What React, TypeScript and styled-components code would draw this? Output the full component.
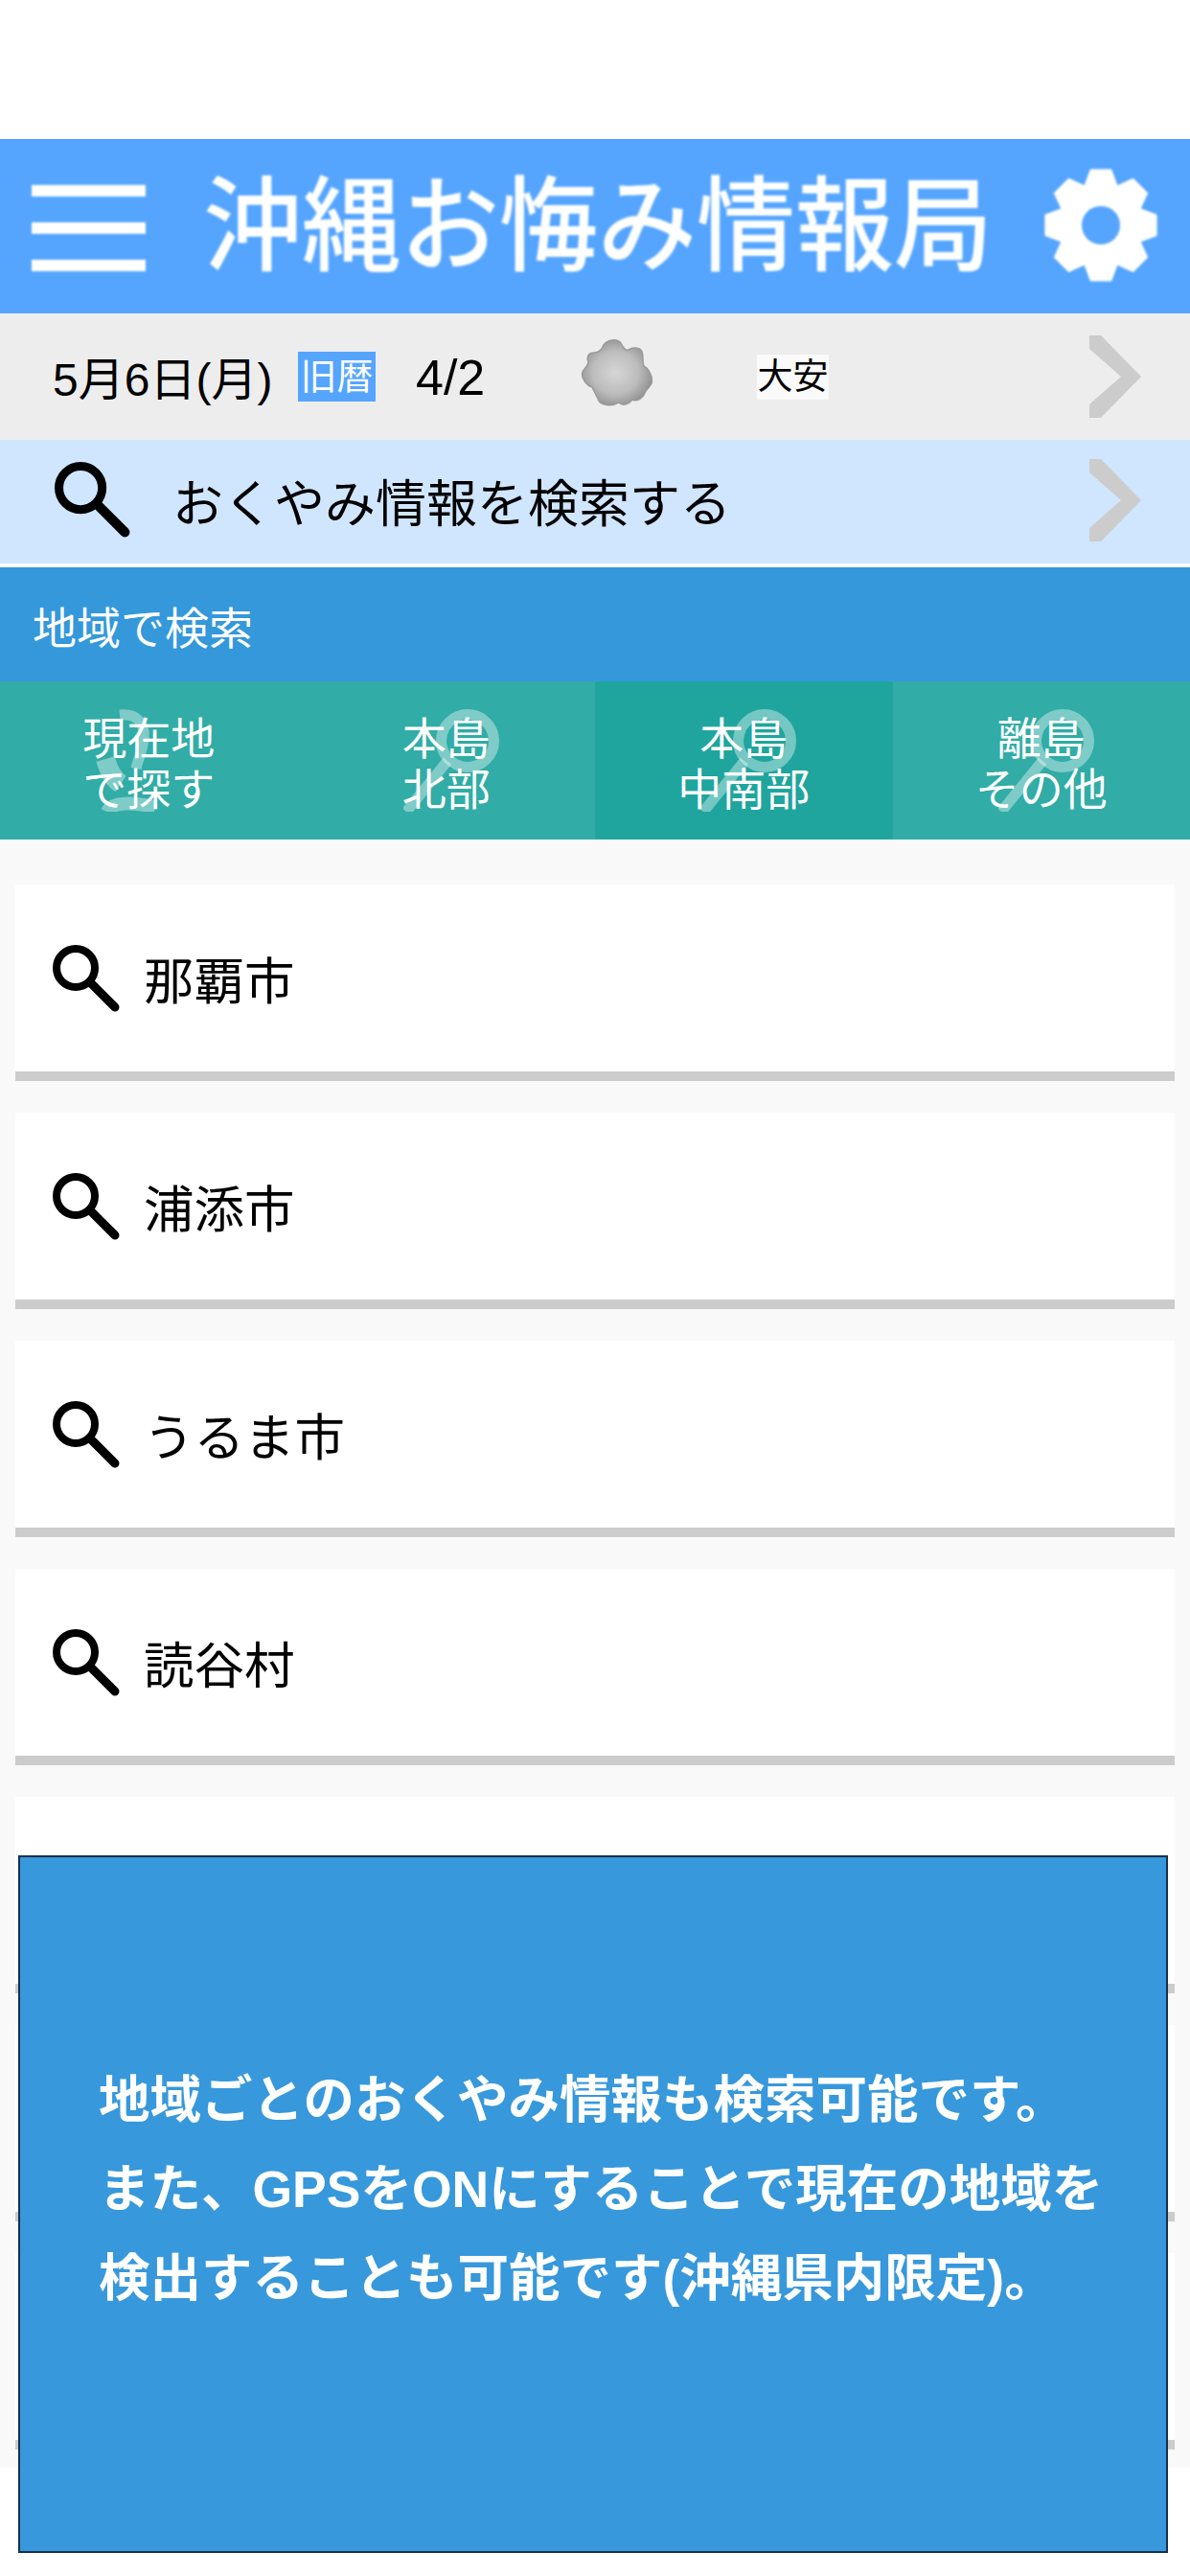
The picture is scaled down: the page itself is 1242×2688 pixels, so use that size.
import React from "react";
import styled, { createGlobalStyle } from "styled-components";

const GlobalStyle = createGlobalStyle`
  html, body {
    margin: 0;
    padding: 0;
    background: #fff;
  }
  body {
    font-family: "Liberation Sans", "Noto Sans CJK JP", sans-serif;
  }
`;

const Page = styled.div`
  position: relative;
  width: 1242px;
  height: 2688px;
  padding-top: 145px;
  box-sizing: border-box;
  overflow: hidden;
  background: #fff;
`;

const Header = styled.header`
  display: flex;
  align-items: center;
  height: 182px;
  padding: 0 32px 0 33px;
  box-sizing: border-box;
  background: #55a5ff;
`;

const MenuButton = styled.div`
  display: flex;
  flex-direction: column;
  gap: 27px;
  width: 119px;
  margin-top: 3px;
  filter: blur(1px);
`;

const MenuBar = styled.span`
  display: block;
  height: 12px;
  background: #fff;
`;

const Title = styled.h1`
  flex: 1;
  margin: 0 0 18px 60px;
  font-family: "Noto Sans CJK JP", sans-serif;
  font-size: 103px;
  font-weight: 500;
  line-height: 1;
  white-space: nowrap;
  color: #fff;
  transform: scaleY(1.05);
  filter: blur(1px);
`;

const GearIcon = styled.svg`
  display: block;
  width: 122px;
  height: 122px;
  margin-top: -2px;
  filter: blur(0.8px);
`;

const DateBar = styled.div`
  display: flex;
  align-items: center;
  height: 132px;
  padding: 0 51px 0 55px;
  box-sizing: border-box;
  background: #ededed;
  color: #000;
`;

const DateText = styled.span`
  width: 256px;
  margin-top: -2px;
  font-size: 48px;
  white-space: nowrap;
`;

const OldCalendar = styled.span`
  width: 81px;
  height: 52px;
  line-height: 52px;
  text-align: center;
  font-size: 38px;
  color: #fff;
  background: #55a5ff;
  white-space: nowrap;
`;

const LunarDate = styled.span`
  width: 172px;
  margin: 1px 0 0 42px;
  font-size: 52px;
`;

const WeatherIcon = styled.svg`
  display: block;
  width: 76px;
  height: 72px;
  margin-top: -6px;
`;

const Rokuyo = styled.span`
  width: 75px;
  height: 47px;
  margin-left: 108px;
  line-height: 47px;
  text-align: center;
  font-size: 37px;
  background: #fafafa;
  white-space: nowrap;
`;

const Chevron = styled.svg`
  display: block;
  width: 54px;
  height: 86px;
  margin-left: auto;
`;

const SearchBar = styled.div`
  display: flex;
  align-items: center;
  height: 133px;
  padding: 0 51px 4px 57px;
  box-sizing: border-box;
  background: #d0e6ff;
  border-bottom: 4px solid #fff;
`;

const SearchText = styled.span`
  margin-left: 44px;
  font-size: 53px;
  color: #000;
  white-space: nowrap;
`;

const SectionTitle = styled.div`
  display: flex;
  align-items: center;
  height: 119px;
  padding-left: 34px;
  box-sizing: border-box;
  font-size: 46px;
  color: #fff;
  background: #3498db;
`;

const Tabs = styled.div`
  display: grid;
  grid-template-columns: repeat(4, 1fr);
  height: 165px;
  background: #31aca6;
`;

const Tab = styled.div<{ $active?: boolean }>`
  position: relative;
  display: flex;
  align-items: center;
  justify-content: center;
  text-align: center;
  font-size: 46px;
  line-height: 53px;
  color: #fff;
  background: ${({ $active }) => ($active ? "#1fa59d" : "transparent")};
  overflow: hidden;
`;

const TabLabel = styled.span`
  position: relative;
  margin-top: 8px;
`;

const TabMark = styled.svg`
  position: absolute;
  top: 29px;
  left: 110px;
  width: 100px;
  height: 107px;
`;

const LocationMark = styled(TabMark)`
  left: 70px;
`;

const CityList = styled.div`
  display: flex;
  flex-direction: column;
  gap: 33px;
  padding: 47px 16px 19px;
  background: #f9f9f9;
`;

const CityCard = styled.div`
  display: flex;
  align-items: center;
  height: 205px;
  padding: 0 0 0 39px;
  box-sizing: border-box;
  background: #fff;
  border-bottom: 10px solid #ccc;
`;

const SearchIcon = styled.svg<{ $size: number; $blur?: boolean }>`
  display: block;
  flex: none;
  width: ${({ $size }) => $size}px;
  height: ${({ $size }) => $size}px;
  filter: ${({ $blur }) => ($blur ? "blur(0.7px)" : "none")};
`;

const CityName = styled.span`
  margin: -2px 0 0 25px;
  font-size: 52.5px;
  color: #000;
  white-space: nowrap;
`;

const Notice = styled.div`
  position: absolute;
  top: 1936px;
  left: 19px;
  display: flex;
  align-items: center;
  width: 1200px;
  height: 728px;
  padding: 0 0 32px 82px;
  box-sizing: border-box;
  border: 2px solid #15304e;
  background: #3798dc;
`;

const NoticeText = styled.p`
  margin: 0;
  font-size: 53.5px;
  font-weight: 700;
  line-height: 93px;
  color: #fff;
  white-space: nowrap;
`;

const gearPath = (() => {
  const points: string[] = [];
  for (let i = 0; i < 8; i++) {
    const base = (i * 45 - 90) * (Math.PI / 180);
    const spread = 10 * (Math.PI / 180);
    const valley = base + 22.5 * (Math.PI / 180);
    [
      [58, base - spread],
      [58, base + spread],
      [43, valley],
    ].forEach(([r, a]) => {
      points.push(`${(61 + r * Math.cos(a)).toFixed(1)} ${(61 + r * Math.sin(a)).toFixed(1)}`);
    });
  }
  return `M${points.join("L")}Z`;
})();

const Magnifier = ({ size, blur }: { size: number; blur?: boolean }) => (
  <SearchIcon $size={size} $blur={blur} viewBox="0 0 70 70" fill="none" stroke="#000">
    <circle cx="24" cy="24" r="20" strokeWidth="8" />
    <path d="M39 39L65 65" strokeWidth="9" strokeLinecap="round" />
  </SearchIcon>
);

const RightArrow = () => (
  <Chevron viewBox="0 0 54 86" fill="none">
    <path d="M0 0H12L54 43L12 86H0V72L33 43L0 14Z" fill="#ccc" />
  </Chevron>
);

const RegionMark = () => (
  <TabMark viewBox="0 0 100 107" fill="none" stroke="#fff" strokeOpacity="0.38">
    <circle cx="67" cy="33" r="27.5" strokeWidth="11" />
    <path d="M46 54L3 107" strokeWidth="11" />
  </TabMark>
);

const CITIES = ["那覇市", "浦添市", "うるま市", "読谷村", "", "", ""];

const App = () => {
  return (
    <Page lang="ja">
      <GlobalStyle />
      <Header>
        <MenuButton>
          <MenuBar />
          <MenuBar />
          <MenuBar />
        </MenuButton>
        <Title>沖縄お悔み情報局</Title>
        <GearIcon viewBox="0 0 122 122">
          <path d={gearPath} fill="#fff" stroke="#fff" strokeWidth="3" strokeLinejoin="round" />
          <circle cx="61" cy="61" r="20" fill="#55a5ff" />
        </GearIcon>
      </Header>
      <DateBar>
        <DateText>5月6日(月)</DateText>
        <OldCalendar>旧暦</OldCalendar>
        <LunarDate>4/2</LunarDate>
        <WeatherIcon viewBox="0 0 76 72">
          <defs>
            <radialGradient id="cloudFill" cx="0.48" cy="0.5" r="0.6">
              <stop offset="0" stopColor="#d6d6d6" />
              <stop offset="0.55" stopColor="#bcbcbc" />
              <stop offset="1" stopColor="#858585" />
            </radialGradient>
          </defs>
          <path
            d="M24 6C28 0 38 -1 42 4C44 8 46 12 50 11C54 8 62 8 64 13C66 18 64 24 66 28C70 30 76 38 74 46C72 50 70 52 68 54C66 60 60 66 54 63C50 68 44 70 40 66C34 70 20 70 18 62C16 58 14 54 12 50C6 48 0 40 2 34C4 30 8 28 8 24C6 18 8 14 14 14C18 14 22 12 24 6Z"
            fill="url(#cloudFill)"
            stroke="#9a9a9a"
            strokeWidth="1.5"
          />
        </WeatherIcon>
        <Rokuyo>大安</Rokuyo>
        <RightArrow />
      </DateBar>
      <SearchBar>
        <Magnifier size={79} blur />
        <SearchText>おくやみ情報を検索する</SearchText>
        <RightArrow />
      </SearchBar>
      <SectionTitle>地域で検索</SectionTitle>
      <Tabs>
        <Tab>
          <LocationMark viewBox="0 0 100 107" fill="none" stroke="#fff" strokeOpacity="0.38">
            <path d="M55 6C72 4 82 14 80 32C78 46 74 52 72 62" strokeWidth="11" />
            <path d="M40 52C44 66 50 74 56 78" strokeWidth="20" />
            <path d="M42 107C46 98 62 96 92 102" strokeWidth="14" />
          </LocationMark>
          <TabLabel>
            現在地
            <br />
            で探す
          </TabLabel>
        </Tab>
        <Tab>
          <RegionMark />
          <TabLabel>
            本島
            <br />
            北部
          </TabLabel>
        </Tab>
        <Tab $active>
          <RegionMark />
          <TabLabel>
            本島
            <br />
            中南部
          </TabLabel>
        </Tab>
        <Tab>
          <RegionMark />
          <TabLabel>
            離島
            <br />
            その他
          </TabLabel>
        </Tab>
      </Tabs>
      <CityList>
        {CITIES.map((city, i) => (
          <CityCard key={i}>
            {city && <Magnifier size={70} />}
            {city && <CityName>{city}</CityName>}
          </CityCard>
        ))}
      </CityList>
      <Notice>
        <NoticeText>
          地域ごとのおくやみ情報も検索可能です。
          <br />
          また、GPSをONにすることで現在の地域を
          <br />
          検出することも可能です(沖縄県内限定)。
        </NoticeText>
      </Notice>
    </Page>
  );
};

export default App;
